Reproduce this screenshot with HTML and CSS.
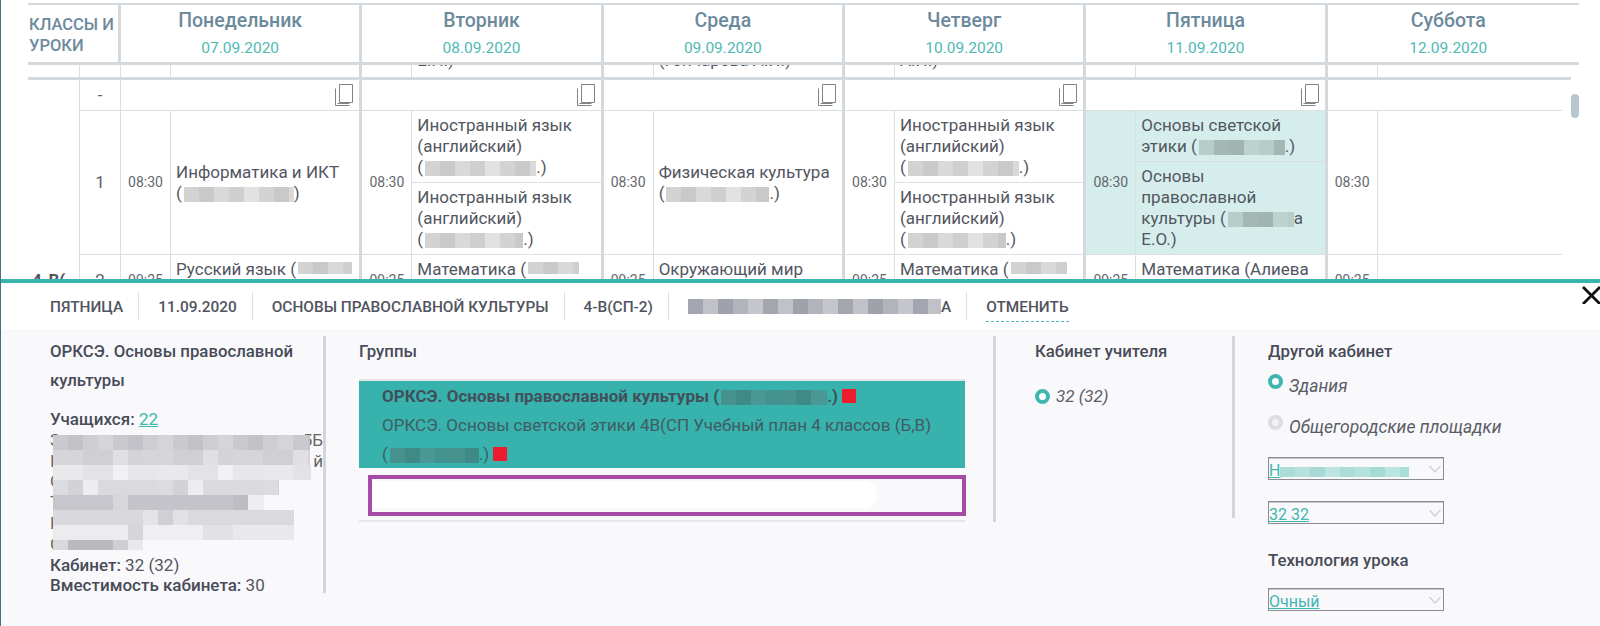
FILE: index.html
```html
<!DOCTYPE html>
<html lang="ru">
<head>
<meta charset="utf-8">
<title>Расписание</title>
<link rel="stylesheet" href="styles.css">
</head>
<body>
<div class="page">
  <section class="schedule">
    <div class="head grid">
      <div class="head-label">КЛАССЫ И УРОКИ</div>
      <div class="head-day"><b>Понедельник</b><span>07.09.2020</span></div>
      <div class="head-day"><b>Вторник</b><span>08.09.2020</span></div>
      <div class="head-day"><b>Среда</b><span>09.09.2020</span></div>
      <div class="head-day"><b>Четверг</b><span>10.09.2020</span></div>
      <div class="head-day"><b>Пятница</b><span>11.09.2020</span></div>
      <div class="head-day last"><b>Суббота</b><span>12.09.2020</span></div>
    </div>

    <div class="frag grid">
      <div class="cls"></div><div class="num"></div>
      <div class="day"><div class="time"></div><div class="lessons"></div></div>
      <div class="day"><div class="time"></div><div class="lessons"><div class="frag-text">Е.Н.)</div></div></div>
      <div class="day"><div class="time"></div><div class="lessons"><div class="frag-text">(Гончарова А.И.)</div></div></div>
      <div class="day"><div class="time"></div><div class="lessons"><div class="frag-text">А.Н.)</div></div></div>
      <div class="day"><div class="time"></div><div class="lessons"></div></div>
      <div class="day last"><div class="time"></div><div class="lessons"></div></div>
    </div>

    <div class="row dash grid">
      <div class="cls"></div><div class="num">-</div>
      <div class="day copy"><svg class="copy-icon" viewBox="0 0 18 22"><path d="M4.5 .5h13v18h-13z"/><path d="M.5 4.5v17h14"/><path d="M2.500 19.500h12"/></svg></div>
      <div class="day copy"><svg class="copy-icon" viewBox="0 0 18 22"><path d="M4.5 .5h13v18h-13z"/><path d="M.5 4.5v17h14"/><path d="M2.500 19.500h12"/></svg></div>
      <div class="day copy"><svg class="copy-icon" viewBox="0 0 18 22"><path d="M4.5 .5h13v18h-13z"/><path d="M.5 4.5v17h14"/><path d="M2.500 19.500h12"/></svg></div>
      <div class="day copy"><svg class="copy-icon" viewBox="0 0 18 22"><path d="M4.5 .5h13v18h-13z"/><path d="M.5 4.5v17h14"/><path d="M2.500 19.500h12"/></svg></div>
      <div class="day copy"><svg class="copy-icon" viewBox="0 0 18 22"><path d="M4.5 .5h13v18h-13z"/><path d="M.5 4.5v17h14"/><path d="M2.500 19.500h12"/></svg></div>
      <div class="day last"></div>
    </div>

    <div class="row grid">
      <div class="cls"></div><div class="num">1</div>
      <div class="day"><div class="time">08:30</div><div class="lessons center"><div class="lesson">Информатика и ИКТ<br>(<i class="blur w110"></i>)</div></div></div>
      <div class="day"><div class="time">08:30</div><div class="lessons">
        <div class="lesson">Иностранный язык (английский)<br>(<i class="blur w111"></i>.)</div>
        <div class="lesson">Иностранный язык (английский)<br>(<i class="blur w98"></i>.)</div>
      </div></div>
      <div class="day"><div class="time">08:30</div><div class="lessons center"><div class="lesson">Физическая культура<br>(<i class="blur w103"></i>.)</div></div></div>
      <div class="day"><div class="time">08:30</div><div class="lessons">
        <div class="lesson">Иностранный язык (английский)<br>(<i class="blur w111"></i>.)</div>
        <div class="lesson">Иностранный язык (английский)<br>(<i class="blur w98"></i>.)</div>
      </div></div>
      <div class="day active"><div class="time">08:30</div><div class="lessons">
        <div class="lesson">Основы светской<br>этики (<i class="blur dim w86"></i>.)</div>
        <div class="lesson grow">Основы<br>православной<br>культуры (<i class="blur dim w66"></i>а<br>Е.О.)</div>
      </div></div>
      <div class="day last"><div class="time">08:30</div><div class="lessons"></div></div>
    </div>

    <div class="row grid">
      <div class="cls"><b>4-В(</b></div><div class="num">2</div>
      <div class="day"><div class="time">09:25</div><div class="lessons"><div class="lesson">Русский язык (<i class="blur up w54"></i><br>Л.А.)</div></div></div>
      <div class="day"><div class="time">09:25</div><div class="lessons"><div class="lesson">Математика (<i class="blur up w51"></i><br>Л.А.)</div></div></div>
      <div class="day"><div class="time">09:25</div><div class="lessons"><div class="lesson">Окружающий мир<br>&nbsp;</div></div></div>
      <div class="day"><div class="time">09:25</div><div class="lessons"><div class="lesson">Математика (<i class="blur up w56"></i><br>Л.А.)</div></div></div>
      <div class="day"><div class="time">09:25</div><div class="lessons"><div class="lesson">Математика (Алиева<br>Л.А.)</div></div></div>
      <div class="day last"><div class="time">09:25</div><div class="lessons"></div></div>
    </div>

    <div class="thumb"></div>
  </section>

  <section class="panel">
    <nav class="crumbs">
      <span class="crumb">Пятница</span>
      <span class="crumb">11.09.2020</span>
      <span class="crumb">Основы православной культуры</span>
      <span class="crumb">4-В(СП-2)</span>
      <span class="crumb"><i class="blur nav w253"></i>А</span>
      <a class="cancel">Отменить</a>
    </nav>
    <svg class="close" viewBox="0 0 18 18"><path d="M1 1l17 17M18 1L1 18"/></svg>

    <div class="body">
      <div class="col col-info">
        <h3>ОРКСЭ. Основы православной культуры</h3>
        <div class="facts">
          <div><b>Учащихся:</b> <a class="link">22</a></div>
          <div class="fake">З<span>5Б</span></div>
          <div class="fake">Ш<span>й</span></div>
          <div class="fake">С</div>
          <div class="fake">Т</div>
          <div class="fake">Н</div>
          <div class="fake">С</div>
          <div><b>Кабинет:</b> 32 (32)</div>
          <div><b>Вместимость кабинета:</b> 30</div>
        </div>
        <div class="mosaic">
          <div class="m1"></div><div class="m2"></div><div class="m3"></div><div class="m4"></div>
          <div class="m5"></div><div class="m6"></div><div class="m7"></div><div class="m8"></div>
        </div>
      </div>

      <div class="col col-groups">
        <h3>Группы</h3>
        <div class="groups">
          <div class="group-on">
            <div class="strong">ОРКСЭ. Основы православной культуры (<i class="blur teal w106"></i>.) <i class="flag"></i></div>
            <div>ОРКСЭ. Основы светской этики 4В(СП Учебный план 4 классов (Б,В)<br>(<i class="blur teal w89"></i>.) <i class="flag"></i></div>
          </div>
          <div class="group-mark"><div class="group-blank"></div></div>
        </div>
      </div>

      <div class="col col-room">
        <h3>Кабинет учителя</h3>
        <label class="radio teacher"><i class="dot"></i><em>32 (32)</em></label>
      </div>

      <div class="col-other">
        <h3>Другой кабинет</h3>
        <label class="radio lifted first"><i class="dot"></i><em>Здания</em></label>
        <label class="radio lifted second"><i class="dot off"></i><em>Общегородские площадки</em></label>
        <div class="select s1"><a class="link">Н<i class="blur pick w129"></i></a><svg class="chev" viewBox="0 0 12 8"><path d="M.5 1l5.500 6 5.500-6"/></svg></div>
        <div class="select s2"><a class="link">32 32</a><svg class="chev" viewBox="0 0 12 8"><path d="M.5 1l5.500 6 5.500-6"/></svg></div>
        <h3 class="tech">Технология урока</h3>
        <div class="select s3"><a class="link">Очный</a><svg class="chev" viewBox="0 0 12 8"><path d="M.5 1l5.500 6 5.500-6"/></svg></div>
      </div>
    </div>
  </section>
</div>
</body>
</html>
```

FILE: styles.css
```css
* { box-sizing: border-box; }
html, body { margin: 0; padding: 0; }
body { font-family: Roboto, "Liberation Sans", sans-serif; color: #53565f; background: #fff; }
.page { width: 1600px; height: 626px; overflow: hidden; border-left: 1px solid #4a6e80; display: flex; flex-direction: column; }

/* schedule */
.schedule { position: relative; height: 279px; flex: none; overflow: hidden; padding: 3px 0 0 27px; }
.grid { display: grid; grid-template-columns: 51px 42px repeat(5, 241.33px) 234px; }
.head { grid-template-columns: 93px repeat(6, 241.33px); width: 1551px; height: 62px; border-top: 2px solid #d3d9dc; border-bottom: 3px solid #d3d9dc; }
.head-label { border-right: 3px solid #d3d9dc; font-size: 16.5px; line-height: 21px; font-weight: 500; color: #6d8a9d; padding: 9px 0 0 1px; }
.head-day { border-right: 3px solid #d3d9dc; text-align: center; display: flex; flex-direction: column; align-items: center; }
.head-day.last { border-right: 0; }
.head-day b { font-size: 19.5px; font-weight: 500; color: #6d8a9d; line-height: 20px; margin-top: 6px; }
.head-day span { font-size: 15.5px; color: #4fbab4; line-height: 20px; margin-top: 7px; }

.frag { height: 15px; width: 1543px; border-bottom: 3px solid #d3d9dc; overflow: hidden; }
.frag .day { height: 12px; }
.frag-text { margin-top: -15px; padding-left: 5px; font-size: 17px; line-height: 21px; }
.row { width: 1536px; font-size: 17px; line-height: 21px; }
.row > * { border-bottom: 1px solid #dadfe2; }
.row > .cls { border-bottom: 0; }
.dash { height: 31px; }
.cls { align-self: center; padding-left: 4px; color: #53565f; }
.num { border-left: 1px solid #dadfe2; border-right: 1px solid #dadfe2; display: flex; align-items: center; justify-content: center; color: #5d6068; }
.day { display: flex; border-right: 3px solid #d3d9dc; min-width: 0; }
.day.last { border-right: 0; }
.day.copy { align-items: center; justify-content: flex-end; padding-right: 6px; }
.day.active { background: #d5eeec; }
.time { width: 50px; flex: none; border-right: 1px solid #dadfe2; display: flex; align-items: center; justify-content: center; font-size: 14px; color: #64676e; }
.lessons { flex: 1; min-width: 0; display: flex; flex-direction: column; }
.lessons.center { justify-content: center; }
.lesson { padding: 4px 5px; flex: 1; color: #53565f; }
.lessons.center .lesson { flex: none; }
.lesson + .lesson { border-top: 1px solid #dadfe2; }
.lesson.grow { flex: 2; }
.lesson .blur { margin-left: 2px; }
.copy-icon { width: 18px; height: 22px; fill: none; stroke: #808487; stroke-width: 1; }
.thumb { position: absolute; left: 1570px; top: 94px; width: 8px; height: 24px; border-radius: 4px; background: #b6c8cd; }

/* redacted pieces */
.blur { display: inline-block; height: 15px; vertical-align: -3px; background: repeating-linear-gradient(90deg, #d3d3d3 0 15px, #c9c9c9 15px 30px, #d9d9d9 30px 45px, #cfcfcf 45px 60px, #e2e2e2 60px 75px); }
.blur.up { height: 12px; vertical-align: 1px; }
.blur.dim { background: repeating-linear-gradient(90deg, #b7cdca 0 15px, #a3b8b5 15px 30px, #a0b4b1 30px 45px, #bcd2cf 45px 60px); }
.blur.nav { height: 15px; background: repeating-linear-gradient(90deg, #a4a6af 0 15px, #c0c2c7 15px 30px, #a0a2ab 30px 45px, #b2b4bb 45px 60px, #c4c6cb 60px 75px); vertical-align: -2px; }
.blur.teal { background: repeating-linear-gradient(90deg, #47918f 0 15px, #3f8987 15px 30px, #4a9896 30px 45px, #429290 45px 60px); vertical-align: -3px; margin-left: 2px; }
.blur.pick { height: 10px; vertical-align: -1px; background: repeating-linear-gradient(90deg, #aadcd8 0 15px, #b7e1de 15px 30px, #a5dad6 30px 45px, #bce4e1 45px 60px); }
.w51 { width: 51px; } .w54 { width: 54px; } .w56 { width: 56px; } .w66 { width: 66px; }
.w86 { width: 86px; } .w89 { width: 89px; } .w98 { width: 98px; } .w103 { width: 103px; } .w106 { width: 106px; }
.w110 { width: 110px; } .w111 { width: 111px; } .w129 { width: 129px; } .w253 { width: 253px; }

/* panel */
.panel { position: relative; flex: 1; border-top: 4px solid #3bb3ad; background: #f9f9fb; display: flex; flex-direction: column; min-height: 0; }
.crumbs { height: 46px; flex: none; background: #fff; padding: 9px 0 0 30px; display: flex; align-items: flex-start; font-size: 15.4px; line-height: 30px; font-weight: 500; color: #51545e; text-transform: uppercase; }
.crumb { height: 28px; padding: 0 15px 0 19px; border-right: 1px solid #dde0e2; white-space: nowrap; }
.cancel { margin-left: 19px; height: 30px; border-bottom: 1px dashed #4fbab4; }
.close { position: absolute; left: 1581px; top: 3px; width: 18px; height: 18px; fill: none; stroke: #111; stroke-width: 2.8; }
.body { display: flex; align-items: flex-start; padding-top: 7px; flex: 1; font-size: 17px; line-height: 21px; }
h3 { margin: 0; font-size: 16.8px; line-height: 29px; font-weight: 500; color: #484b58; }
.col { border-right: 3px solid #d3d6d9; padding-top: 1px; flex: none; position: relative; }
.col-info { width: 325px; height: 257px; padding-left: 49px; padding-right: 20px; }
.facts { margin-top: 14px; color: #53565f; line-height: 20.8px; }
.facts b { font-weight: 500; color: #484b58; }
.fake { display: flex; justify-content: space-between; width: 273px; color: #666; }
.link { color: #3fb6b0; text-decoration: underline; }
.mosaic { position: absolute; left: 52px; top: 99px; display: flex; flex-direction: column; }
.mosaic div { height: 15px; }
.m1 { width: 257px; background: repeating-linear-gradient(90deg, #c9c9ce 0 15px, #c2c2c8 15px 30px, #cdcdd2 30px 45px, #d5d5d9 45px 60px); }
.m2 { width: 257px; background: repeating-linear-gradient(90deg, #d6d6da 0 30px, #cfcfd4 30px 60px, #e0e0e3 60px 75px, #d3d3d8 75px 90px); }
.m3 { width: 258px; background: repeating-linear-gradient(90deg, #e9e9ec 0 30px, #e3e3e7 30px 60px, #f1f1f3 60px 75px, #e7e7ea 75px 105px); }
.m4 { width: 226px; background: repeating-linear-gradient(90deg, #dcdce0 0 15px, #d2d2d7 15px 30px, #ededf0 30px 45px, #d9d9de 45px 105px); }
.m5 { width: 211px; background: linear-gradient(90deg, #c6c6cc 0 60px, #d6d6db 60px 75px, #c4c4ca 75px 180px, #bdbdc4 180px 195px, #eeeef0 195px); }
.m6 { width: 241px; background: repeating-linear-gradient(90deg, #d8d8dd 0 90px, #e4e4e7 90px 105px, #cfcfd6 105px 120px, #e1e1e5 120px 135px, #dadade 135px 241px); }
.m7 { width: 241px; background: repeating-linear-gradient(90deg, #ececef 0 75px, #d5d5da 75px 90px, #efeff1 90px 150px, #e2e2e6 150px 180px, #e9e9ec 180px 241px); }
.m8 { width: 90px; height: 10px !important; background: linear-gradient(90deg, #d9d9dd 0 15px, #b9b9bf 15px 60px, #cfcfd3 60px 75px, #e9e9ec 75px); }

.col-groups { width: 670px; height: 186px; padding-left: 33px; padding-right: 28px; }
.groups { margin-top: 13px; border-top: 2px solid #e2e4e6; border-bottom: 2px solid #e6e7e9; }
.group-on { background: #38b2ac; height: 87px; padding: 1px 0 0 23px; line-height: 29px; color: #3f5c63; }
.strong { font-weight: 700; color: #41505a; white-space: nowrap; }
.flag { display: inline-block; width: 14px; height: 14px; background: #ed1c2e; vertical-align: -1px; }
.group-mark { margin: 7px -1px 4px 9px; height: 41px; border: 4px solid #a64ca6; padding: 2px 0 0 1px; }
.group-blank { width: 504px; height: 27px; background: #fff; border-radius: 0 14px 14px 0; }
.col-room { width: 239px; height: 182px; padding-left: 39px; }
.col-other { padding: 1px 0 0 33px; flex: none; }
.radio { display: flex; align-items: center; color: #5a5d66; line-height: 21px; }
.radio em { font-style: italic; }
.dot { width: 15px; height: 15px; border-radius: 50%; border: 4px solid #3fb6b0; background: #fff; flex: none; margin-right: 6px; }
.dot.off { border-color: #dcdde0; background: #f2f2f4; }
.teacher { margin-top: 20px; }
.lifted em { font-size: 17.5px; }
.lifted .dot { margin-top: -10px; }
.first { margin-top: 10px; }
.second { margin-top: 20px; }
.select { width: 176px; height: 23px; border: 1px solid #8c8c92; box-shadow: inset 0 1px 0 #c8c8cc; position: relative; font-size: 16px; line-height: 25px; white-space: nowrap; overflow: hidden; }
.s1 { margin-top: 19px; }
.s2 { margin-top: 21px; }
.tech { margin-top: 22px; }
.s3 { margin-top: 13px; }
.chev { position: absolute; right: 2px; top: 7px; width: 12px; height: 8px; fill: none; stroke: #cfcfd2; stroke-width: 1.2; }
```
